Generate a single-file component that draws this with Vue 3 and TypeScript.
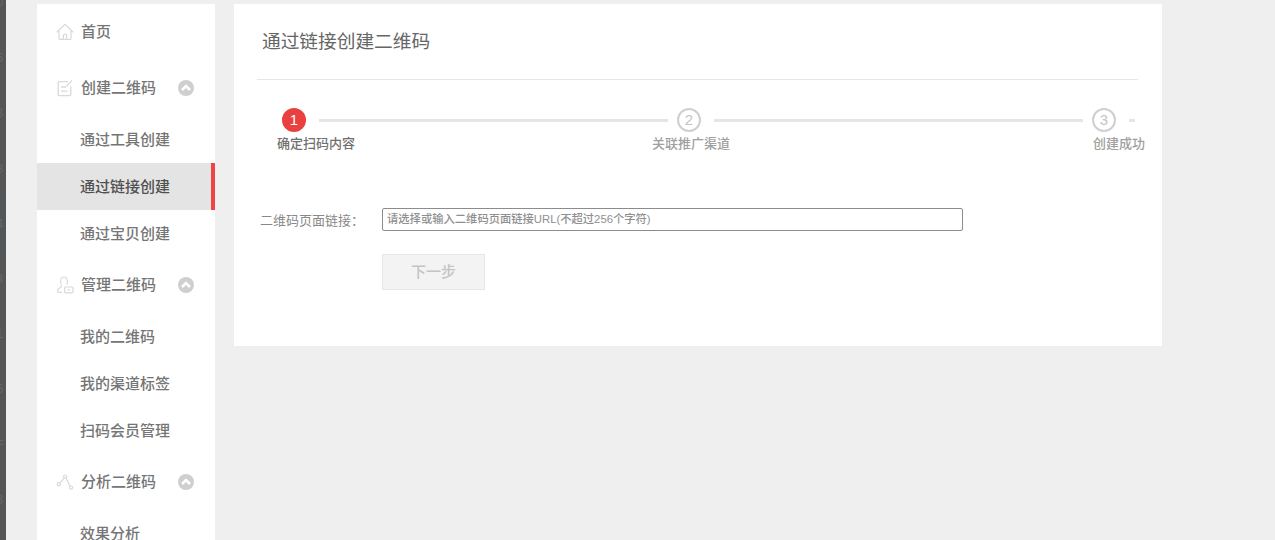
<script setup lang="ts">
const gutter: string[] = ['0', '5', '3', '8', '4', '3', '1', '5', 'F', '3']

interface Group {
  title: string
  icon: string
  items: string[]
}

const groups: Group[] = [
  { title: '创建二维码', icon: 'edit', items: ['通过工具创建', '通过链接创建', '通过宝贝创建'] },
  { title: '管理二维码', icon: 'user', items: ['我的二维码', '我的渠道标签', '扫码会员管理'] },
  { title: '分析二维码', icon: 'share', items: ['效果分析'] }
]
const activeItem = '通过链接创建'
</script>

<template>
  <div class="page">
    <div class="gutter">
      <span v-for="(d, i) in gutter" :key="i" class="digit">{{ d }}</span>
    </div>

    <nav class="sidebar">
      <div class="heading">
        <span class="icon">
          <svg width="18" height="18" viewBox="0 0 18 18" fill="none" stroke="#d9d9d9" stroke-width="1.2">
            <path d="M0.8 9.2 9 1.4l8.2 7.8" />
            <path d="M3 7.8v7.4a1.2 1.2 0 0 0 1.2 1.2h9.6a1.2 1.2 0 0 0 1.2-1.2V7.8" />
            <path d="M7.4 16.2v-3.4a1.6 1.6 0 0 1 3.2 0v3.4" />
          </svg>
        </span>
        <span class="home-label">首页</span>
      </div>

      <template v-for="g in groups" :key="g.title">
        <div class="heading">
          <span class="icon">
            <svg v-if="g.icon === 'edit'" width="18" height="18" viewBox="0 0 18 18" fill="none" stroke="#d9d9d9" stroke-width="1.3">
              <path d="M12 2.6H3.2a1 1 0 0 0-1 1v12a1 1 0 0 0 1 1h10.6a1 1 0 0 0 1-1V7.5" />
              <path d="M5 8h5M5 12.2h6.5" />
              <path d="M10.5 7.2 16 1.4" />
            </svg>
            <svg v-else-if="g.icon === 'user'" width="18" height="18" viewBox="0 0 18 18" fill="none" stroke="#d9d9d9" stroke-width="1.2">
              <path d="M5 8.5C3.8 3.5 5.2 1 8 1s4.2 2.5 3 7.5" />
              <path d="M5.6 9.2c.2 1.2-.4 2-1.6 2.6-1.6.8-2.6 1.6-2.6 3 0 1 .6 1.6 1.6 1.6h3" />
              <rect x="8.6" y="11" width="8.4" height="5.8" rx="1" />
              <path d="M11.5 13.9h2.6" />
            </svg>
            <svg v-else width="18" height="18" viewBox="0 0 18 18" fill="none" stroke="#d9d9d9" stroke-width="1.2">
              <circle cx="2.8" cy="11.2" r="1.6" />
              <circle cx="9.2" cy="3.6" r="1.6" />
              <circle cx="15" cy="14.6" r="1.6" />
              <path d="M4 10 8.2 4.8M10 5l4.2 8.2" />
            </svg>
          </span>
          <span class="heading-label">{{ g.title }}</span>
          <svg class="chevron" width="16" height="16" viewBox="0 0 16 16">
            <circle cx="8" cy="8" r="8" fill="#cfcfcf" />
            <path d="M4 10 8 6.1l4 3.9" fill="none" stroke="#fff" stroke-width="2.6" />
          </svg>
        </div>
        <a
          v-for="item in g.items"
          :key="item"
          class="sub"
          :class="{ active: item === activeItem }"
        >{{ item }}</a>
      </template>
    </nav>

    <main class="panel">
      <h1 class="title">通过链接创建二维码</h1>

      <div class="track">
        <span class="circle current">1</span>
        <span class="line first"></span>
        <span class="circle">2</span>
        <span class="line second"></span>
        <span class="circle">3</span>
        <span class="line tail"></span>
      </div>
      <div class="labels">
        <span class="label strong">确定扫码内容</span>
        <span class="label second-label">关联推广渠道</span>
        <span class="label third-label">创建成功</span>
      </div>

      <div class="form-row">
        <label class="form-label">二维码页面链接：</label>
        <input class="url" type="text" placeholder="请选择或输入二维码页面链接URL(不超过256个字符)" />
      </div>
      <button class="next" type="button" disabled>下一步</button>
    </main>
  </div>
</template>

<style>
html,
body {
  margin: 0;
  background: #efefef;
}
</style>

<style scoped>
.page {
  display: flex;
  align-items: flex-start;
  width: 1275px;
  height: 540px;
  overflow: hidden;
  background: #efefef;
  font-family: "Noto Sans CJK SC", "Liberation Sans", sans-serif;
  color: #666;
}

.gutter {
  flex: none;
  display: flex;
  flex-direction: column;
  width: 6px;
  height: 540px;
  overflow: hidden;
  background: linear-gradient(180deg, #545556 0, #545556 203px, #50565a 203px, #50565a 258px, #555 258px, #555 100%);
}

.digit {
  flex: none;
  display: block;
  height: 55.2px;
  line-height: 55.2px;
  margin-left: -4px;
  font-family: "Liberation Sans", sans-serif;
  font-size: 13px;
  color: #666;
}

.digit:first-child {
  margin-top: -25px;
}

.sidebar {
  flex: none;
  box-sizing: border-box;
  width: 178px;
  height: 600px;
  margin: 4px 0 0 31px;
  background: #fff;
}

.heading {
  display: flex;
  align-items: center;
  height: 56px;
  padding-left: 19px;
  font-size: 15px;
  font-weight: 500;
  color: #757575;
}

.icon {
  flex: none;
  display: flex;
  width: 18px;
  height: 18px;
  margin-right: 7px;
}

.home-label {
  margin: -3px 0 0 0;
  line-height: 20px;
}

.heading-label {
  width: 76px;
  margin-top: -3px;
  line-height: 20px;
  white-space: nowrap;
}

.chevron {
  flex: none;
  margin-left: 21px;
}

.sub {
  display: block;
  box-sizing: border-box;
  height: 47px;
  line-height: 45px;
  padding-left: 43px;
  font-size: 15px;
  font-weight: 500;
  color: #757575;
}

.sub.active {
  background: #e4e4e4;
  border-right: 4px solid #ee4444;
  color: #505050;
}

.panel {
  flex: none;
  box-sizing: border-box;
  width: 928px;
  height: 342px;
  margin: 4px 0 0 19px;
  background: #fff;
}

.title {
  box-sizing: border-box;
  height: 76px;
  margin: 0 24px 0 23px;
  padding-left: 5px;
  border-bottom: 1px solid #e6e6e6;
  font-size: 18.7px;
  font-weight: 400;
  line-height: 72px;
  color: #666;
}

.track {
  display: flex;
  align-items: center;
  height: 24px;
  margin: 28px 0 0 48px;
}

.circle {
  flex: none;
  box-sizing: border-box;
  width: 24px;
  height: 24px;
  border: 2px solid #cfcfcf;
  border-radius: 50%;
  font-family: "Liberation Sans", sans-serif;
  font-size: 15px;
  line-height: 20px;
  text-align: center;
  color: #c4c4c4;
}

.circle.current {
  border-color: #e94040;
  background: #e94040;
  color: #fff;
}

.line {
  flex: none;
  height: 3px;
  background: #e5e5e5;
}

.line.first {
  width: 349px;
  margin: 0 9px 0 13px;
}

.line.second {
  width: 369px;
  margin: 0 9px 0 13px;
}

.line.tail {
  width: 6px;
  margin-left: 13px;
}

.labels {
  display: flex;
  margin: 1px 0 0 43px;
  font-size: 13px;
  font-weight: 500;
  line-height: 20px;
  white-space: nowrap;
}

.label {
  flex: none;
  color: #a0a0a0;
}

.label.strong {
  color: #707070;
}

.second-label {
  margin-left: 297px;
}

.third-label {
  margin-left: 363px;
}

.form-row {
  display: flex;
  align-items: center;
  height: 23px;
  margin: 55px 0 0 26px;
}

.form-label {
  flex: none;
  width: 122px;
  margin-top: -1px;
  font-size: 13px;
  color: #888;
  white-space: nowrap;
}

.url {
  flex: none;
  box-sizing: border-box;
  width: 581px;
  height: 23px;
  padding: 0 4px 1px;
  border: 1px solid #8c8c8c;
  border-radius: 2px;
  outline: none;
  background: #fff;
  font-family: "Liberation Sans", "Noto Sans CJK SC", sans-serif;
  font-size: 11.3px;
  font-weight: 500;
  color: #666;
}

.url::placeholder {
  color: #8f8f8f;
  opacity: 1;
}

.next {
  display: block;
  box-sizing: border-box;
  width: 103px;
  height: 36px;
  margin: 23px 0 0 148px;
  padding: 0 0 3px;
  border: 1px solid #e6e6e6;
  background: #f3f3f3;
  font-family: "Noto Sans CJK SC", "Liberation Sans", sans-serif;
  font-size: 15px;
  font-weight: 500;
  color: #c4c4c4;
}
</style>
